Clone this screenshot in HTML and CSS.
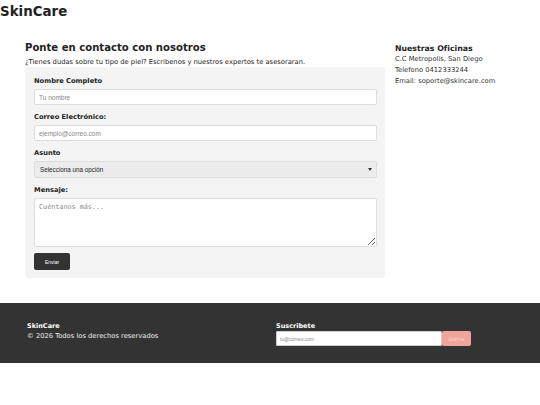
FILE: index.html
```html
<!DOCTYPE html>
<html lang="es">
<head>
<meta charset="utf-8">
<title>SkinCare - Contacto</title>
<link rel="stylesheet" href="styles.css">
</head>
<body>
<header class="site-header">
  <div class="logo">SkinCare</div>
</header>
<main class="contact">
  <section class="contact-main">
    <h1 class="contact-title">Ponte en contacto con nosotros</h1>
    <p class="contact-sub">¿Tienes dudas sobre tu tipo de piel? Escribenos y nuestros expertos te asesoraran.</p>
    <form class="contact-form">
      <div class="field">
        <label class="field-label">Nombre Completo</label>
        <input class="field-input" type="text" placeholder="Tu nombre">
      </div>
      <div class="field">
        <label class="field-label">Correo Electrónico:</label>
        <input class="field-input" type="email" placeholder="ejemplo@correo.com">
      </div>
      <div class="field">
        <label class="field-label">Asunto</label>
        <div class="select-wrap">
          <select class="field-select">
            <option>Selecciona una opción</option>
          </select>
        </div>
      </div>
      <div class="field">
        <label class="field-label">Mensaje:</label>
        <textarea class="field-textarea" placeholder="Cuéntanos más..."></textarea>
      </div>
      <button class="btn-send" type="button">Enviar</button>
    </form>
  </section>
  <aside class="offices">
    <h2 class="offices-title">Nuestras Oficinas</h2>
    <p class="offices-line">C.C Metropolis, San Diego</p>
    <p class="offices-line">Telefono 0412333244</p>
    <p class="offices-line">Email: soporte@skincare.com</p>
  </aside>
</main>
<footer class="site-footer">
  <div class="footer-brand">
    <div class="footer-name">SkinCare</div>
    <div class="footer-copy">© 2026 Todos los derechos reservados</div>
  </div>
  <div class="footer-sub">
    <div class="footer-sub-title">Suscribete</div>
    <div class="footer-sub-row">
      <input class="footer-input" type="email" placeholder="tu@correo.com">
      <button class="footer-btn" type="button">Unirme</button>
    </div>
  </div>
</footer>
</body>
</html>
```

FILE: styles.css
```css
* { box-sizing: border-box; }
html, body { margin: 0; padding: 0; background: #fff; }
body {
  font-family: "DejaVu Sans", Verdana, sans-serif;
  color: #222;
  width: 540px;
}
.site-header { height: 36px; padding: 3px 0 0 0; }
.logo {
  font-weight: bold;
  font-size: 13.4px;
  line-height: 18px;
  color: #222;
}
.contact {
  display: grid;
  grid-template-columns: 360px 120px;
  column-gap: 10px;
  padding: 0 25px;
}
.contact-title {
  margin: 5px 0 0 0;
  font-size: 10.1px;
  line-height: 14px;
  font-weight: bold;
}
.contact-sub {
  margin: 3px 0 0 0;
  font-size: 6.75px;
  line-height: 9px;
}
.contact-form {
  background: #f4f4f4;
  border-radius: 4px;
  padding: 9px 8px 8px 9px;
}
.field { margin-bottom: 7px; }
.field-label {
  display: block;
  font-weight: bold;
  font-size: 6.7px;
  line-height: 10px;
  margin-bottom: 3px;
  color: #222;
}
.field-input, .field-select, .field-textarea {
  display: block;
  width: 100%;
  border: 1px solid #ddd;
  border-radius: 2px;
  background: #fff;
  font-family: "Liberation Sans", Arial, sans-serif;
  font-size: 6.5px;
  color: #222;
  padding: 0 4px;
}
.field-input { height: 16px; }
.field-input::placeholder { color: #888; }
.select-wrap { position: relative; }
.select-wrap::after {
  content: "";
  position: absolute;
  right: 5px;
  top: 7px;
  border-left: 2px solid transparent;
  border-right: 2px solid transparent;
  border-top: 3px solid #333;
  pointer-events: none;
}
.field-select {
  height: 17px;
  background: #ececec;
  padding: 0 5px;
  appearance: none;
  -webkit-appearance: none;
  font-size: 6.3px;
}
.field-textarea {
  height: 49px;
  padding: 4px 4px;
  font-family: "DejaVu Sans Mono", monospace;
  font-size: 6.75px;
  resize: vertical;
}
.field-textarea::placeholder { color: #888; }
.btn-send {
  display: block;
  margin-top: -1px;
  width: 36px;
  height: 17px;
  border: none;
  border-radius: 2px;
  background: #333;
  color: #fff;
  font-family: "Liberation Sans", Arial, sans-serif;
  font-size: 5px;
  padding: 0;
}
.offices { padding-top: 7px; }
.offices-title {
  margin: 0;
  font-size: 7.8px;
  line-height: 11px;
  font-weight: bold;
}
.offices-line {
  margin: 0;
  font-size: 6.75px;
  line-height: 11px;
  color: #333;
}
.site-footer {
  margin-top: 25px;
  height: 60px;
  background: #333;
  color: #fff;
  display: grid;
  grid-template-columns: 249px 1fr;
  padding: 18px 27px 0 27px;
}
.footer-name {
  font-weight: bold;
  font-size: 6.5px;
  line-height: 10px;
}
.footer-copy {
  font-size: 6.75px;
  line-height: 10px;
  color: #eee;
}
.footer-sub-title {
  font-weight: bold;
  font-size: 6.5px;
  line-height: 10px;
}
.footer-sub-row { display: flex; }
.footer-input {
  width: 166px;
  height: 15px;
  border: 1px solid #ccc;
  border-radius: 1px;
  background: #fff;
  font-family: "Liberation Sans", Arial, sans-serif;
  font-size: 5px;
  padding: 0 3px;
}
.footer-input::placeholder { color: #888; }
.footer-btn {
  width: 29px;
  height: 15px;
  border: none;
  border-radius: 2px;
  background: #f2a49a;
  color: #fbd8d3;
  font-family: "Liberation Sans", Arial, sans-serif;
  font-size: 5px;
  padding: 0;
}
```
